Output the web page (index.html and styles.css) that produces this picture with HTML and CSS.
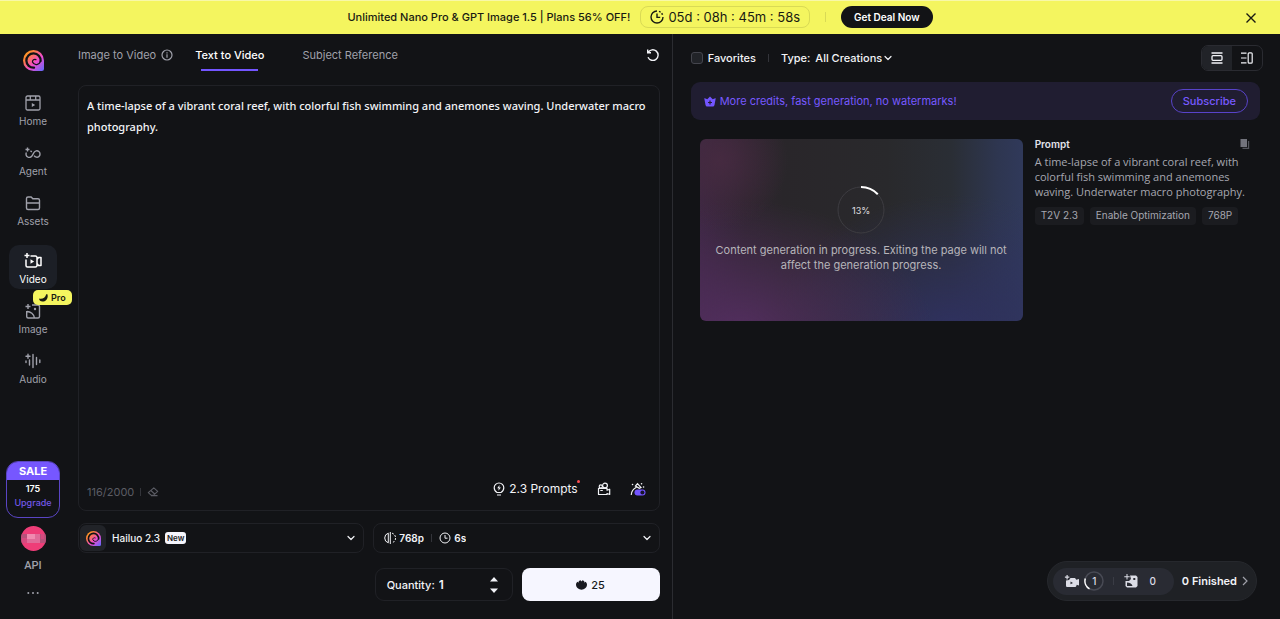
FILE: index.html
```html
<!DOCTYPE html>
<html lang="en">
<head>
    <meta charset="UTF-8">
    <meta name="viewport" content="width=device-width, initial-scale=1.0">
    <title>Hailuo AI - Text to Video</title>
    <link rel="stylesheet" href="styles.css">
</head>
<body>
    <svg class="sprite" aria-hidden="true">
        <defs>
            <linearGradient id="logo-fill" x1="0" y1="0" x2="1" y2="1">
                <stop offset="0" stop-color="#ffb800"/>
                <stop offset="0.3" stop-color="#ff7a45"/>
                <stop offset="0.6" stop-color="#f04bd0"/>
                <stop offset="1" stop-color="#5b6bff"/>
            </linearGradient>
        </defs>
        <symbol id="logo" viewBox="0 0 20 20">
            <path fill="url(#logo-fill)" d="M10 0a10 10 0 0 0 0 20h8a2 2 0 0 0 2-2v-8A10 10 0 0 0 10 0z"/>
            <path fill="none" stroke="#121316" stroke-width="2.2" stroke-linecap="round" d="M10.5 16.8A6.8 6.8 0 1 1 16.8 10.5"/>
            <path fill="none" stroke="#121316" stroke-width="1.2" stroke-linecap="round" d="M16.6 10.5A4 4 0 0 1 9 11.5A2.3 2.3 0 0 1 12.3 9.2"/>
        </symbol>
        <symbol id="chevron" viewBox="0 0 10 10">
            <path fill="none" stroke="currentColor" stroke-width="1.2" stroke-linecap="round" stroke-linejoin="round" d="M2 3.5l3 3 3-3"/>
        </symbol>
    </svg>

    <header class="promo">
        <p class="promo-text">Unlimited Nano Pro &amp; GPT Image 1.5 | Plans 56% OFF!</p>
        <div class="timer">
            <svg width="14" height="14" viewBox="0 0 14 14" fill="none" stroke="currentColor" stroke-width="1.4">
                <path d="M7 1a6 6 0 1 0 6 6M7 3.5V7.4h3.2"/>
                <path d="M9 1.4a6 6 0 0 1 3.7 3.8" stroke-dasharray="1.8 1.3"/>
            </svg>
            <span>05d : 08h : 45m : 58s</span>
        </div>
        <span class="promo-divider"></span>
        <button class="deal">Get Deal Now</button>
        <button class="close" aria-label="Close">
            <svg width="12" height="12" viewBox="0 0 12 12" stroke="currentColor" stroke-width="1.4"><path d="M1.5 1.5l9 9M10.5 1.5l-9 9"/></svg>
        </button>
    </header>

    <div class="layout">
        <nav class="sidebar">
            <a class="brand" href="#" aria-label="Hailuo"><svg width="21" height="21"><use href="#logo"/></svg></a>
            <div class="nav-group">
                <a class="nav-item" href="#">
                    <svg width="20" height="20" viewBox="0 0 20 20" fill="none" stroke="currentColor" stroke-width="1.3">
                        <rect x="3" y="3" width="14" height="14" rx="1.5"/>
                        <path d="M3 7h14M7.3 3v4M12.7 3v4"/>
                        <path d="M8.8 9.9l3.4 2-3.4 2z" fill="currentColor" stroke="none"/>
                    </svg>
                    <span>Home</span>
                </a>
                <a class="nav-item" href="#">
                    <svg width="20" height="20" viewBox="0 0 20 20" fill="none" stroke="currentColor" stroke-width="1.4">
                        <path d="M3.4 9.5a3.3 3.3 0 0 0 5.8 3.2l1.8-3.2a3.2 3.2 0 1 1 .1 3.2M7.5 7.7l1.3 1.2"/>
                        <path d="M4.5 4.5v4M2.5 6.5h4"/>
                    </svg>
                    <span>Agent</span>
                </a>
                <a class="nav-item" href="#">
                    <svg width="20" height="20" viewBox="0 0 20 20" fill="none" stroke="currentColor" stroke-width="1.4" stroke-linejoin="round">
                        <path d="M3.5 15V5.5a1.5 1.5 0 0 1 1.5-1.5h3.2l1.6 1.8H15a1.5 1.5 0 0 1 1.5 1.5V15a1.5 1.5 0 0 1-1.5 1.5H5A1.5 1.5 0 0 1 3.5 15zM3.5 10h13"/>
                    </svg>
                    <span>Assets</span>
                </a>
            </div>
            <div class="nav-group">
                <a class="nav-item active" href="#">
                    <svg width="20" height="20" viewBox="0 0 20 20" fill="none" stroke="currentColor" stroke-width="1.5" stroke-linejoin="round">
                        <path d="M7.5 5h5a1.5 1.5 0 0 1 1.5 1.5v8a1.5 1.5 0 0 1-1.5 1.5h-8A1.5 1.5 0 0 1 3 14.5v-6M14 8.5l1.5-2H18v8h-2.5l-1.5-2"/>
                        <path d="M4 2v5M1.5 4.5h5"/>
                        <path d="M7.5 8.3l3.6 2.2-3.6 2.2z" fill="currentColor" stroke="none"/>
                    </svg>
                    <span>Video</span>
                </a>
                <a class="nav-item" href="#">
                    <svg width="20" height="20" viewBox="0 0 20 20" fill="none" stroke="currentColor" stroke-width="1.4" stroke-linejoin="round">
                        <path d="M9 4h6a1.5 1.5 0 0 1 1.5 1.5v10a1.5 1.5 0 0 1-1.5 1.5H5.2a1.5 1.5 0 0 1-1.5-1.5V10M4 10.5c3.5 0 7 2.5 7.5 6.5"/>
                        <path d="M5 3v5M2.5 5.5h5"/>
                        <circle cx="12" cy="8" r="1.2" fill="currentColor" stroke="none"/>
                    </svg>
                    <span>Image</span>
                    <span class="pro">
                        <svg width="9" height="8" viewBox="0 0 9 8"><path d="M7.2.2h1.2c1.2 4-1.3 7.3-4.9 7.3C1.5 7.5.2 6.500 0 4.500c2.800 1 6.400-.4 7.200-4.300z" fill="currentColor"/></svg>
                        Pro
                    </span>
                </a>
                <a class="nav-item" href="#">
                    <svg width="20" height="20" viewBox="0 0 20 20" fill="none" stroke="currentColor" stroke-width="1.4" stroke-linecap="round">
                        <path d="M3 10v1.500M6.500 9v5M10 3.500v13M13.500 6.500v7M16.800 9v2.500M5 3.200v4M3 5.200h4"/>
                    </svg>
                    <span>Audio</span>
                </a>
            </div>
            <div class="account">
                <a class="sale" href="#">
                    <strong>SALE</strong>
                    <span class="credits">175</span>
                    <span class="upgrade">Upgrade</span>
                </a>
                <button class="avatar" aria-label="Account">
                    <svg width="25" height="25" viewBox="0 0 25 25">
                        <clipPath id="avatar-clip"><circle cx="12.5" cy="12.5" r="12.5"/></clipPath>
                        <g clip-path="url(#avatar-clip)">
                            <path fill="#ee3d78" d="M0 0h25v25H0z"/>
                            <path fill="#b8517a" d="M0 8h6v9H0zM19 8h6v9h-6z"/>
                            <path fill="#f08bb0" d="M6 8h8v5H6z"/>
                            <path fill="#e06b99" d="M14 8h5v9h-5zM6 13h8v4H6z"/>
                            <path fill="#d64a7f" d="M1 12h5v5H1zM20 8h3v5h-3z"/>
                        </g>
                    </svg>
                </button>
                <a class="api" href="#">API</a>
                <button class="more" aria-label="More">
                    <svg width="12" height="4" viewBox="0 0 12 4" fill="currentColor"><circle cx="1.3" cy="2" r="1"/><circle cx="6" cy="2" r="1"/><circle cx="10.7" cy="2" r="1"/></svg>
                </button>
            </div>
        </nav>

        <main class="editor">
            <div class="tabs">
                <a class="tab" href="#">Image to Video
                    <svg width="12" height="12" viewBox="0 0 12 12" fill="none" stroke="currentColor" stroke-width="1.2"><circle cx="6" cy="6" r="5"/><path d="M6 5.3v3.4M6 3.2v1.2"/></svg>
                </a>
                <a class="tab current" href="#">Text to Video</a>
                <a class="tab" href="#">Subject Reference</a>
                <button class="reset" aria-label="Reset">
                    <svg width="14" height="14" viewBox="0 0 14 14" fill="none" stroke="currentColor" stroke-width="1.4"><path d="M2.2 4.5A5.3 5.3 0 1 1 2 9.3M1.7 1.5v3.3H5"/></svg>
                </button>
            </div>

            <div class="prompt-box">
                <textarea class="prompt-input" aria-label="Prompt" spellcheck="false">A time-lapse of a vibrant coral reef, with colorful fish swimming and anemones waving. Underwater macro photography.</textarea>
                <div class="prompt-tools">
                    <div class="counter">
                        <span>116/2000</span>
                        <span class="bar"></span>
                        <button aria-label="Clear prompt">
                            <svg width="12" height="12" viewBox="0 0 12 12" fill="none" stroke="currentColor" stroke-width="1.1" stroke-linejoin="round"><path d="M4.3 9.3L1.3 6.6 6.8 1.8l3.9 3.6-4.4 3.9zM3.8 4.5l3.9 3.500M4 9.600h6.500"/></svg>
                        </button>
                    </div>
                    <button class="prompts">
                        <svg width="12" height="14" viewBox="0 0 12 14" fill="none" stroke="currentColor" stroke-width="1.2"><path d="M4 10.5C2.3 9.5 1.2 8 1.2 5.8a4.8 4.8 0 0 1 9.6 0c0 2.2-1.1 3.7-2.8 4.700zM4 13h4"/><path d="M6.500 3L4.200 6.300h1.500L5.400 8.800l2.500-3.300H6.300z" fill="currentColor" stroke="none"/></svg>
                        2.3 Prompts
                    </button>
                    <button class="tool" aria-label="Camera movement">
                        <svg width="14" height="14" viewBox="0 0 14 14" fill="none" stroke="currentColor" stroke-width="1.2" stroke-linejoin="round"><path d="M1.5 6.3H10v1.900l2.700-1v5.300l-2.700-1v1H1.500zM3.300 8.500h2.500"/><circle cx="3.800" cy="4.500" r="1.600"/><circle cx="8" cy="3.500" r="2.400"/></svg>
                    </button>
                    <button class="tool" aria-label="Prompt optimization">
                        <svg width="16" height="14" viewBox="0 0 16 14" fill="none" stroke="currentColor" stroke-width="1.2" stroke-linecap="round">
                            <path d="M1.3 12.5C1.500 9.500 3.300 7 6 5.500M5.500 4l2-2.300L11 5.500 9.300 6.300z"/>
                            <path stroke-width="1.5" d="M2.500 2.500h.1M13.500 5h.1M11.500 1.800h.1"/>
                            <rect x="4.5" y="7.5" width="11" height="6" rx="3" fill="#7355ff" stroke="none"/>
                            <circle cx="12.4" cy="10.5" r="2" fill="#18142c" stroke="none"/>
                        </svg>
                    </button>
                </div>
            </div>

            <div class="options">
                <label class="option model">
                    <span class="model-logo"><svg width="15" height="15"><use href="#logo"/></svg></span>
                    <select aria-label="Model"><option>Hailuo 2.3</option><option>Hailuo 02</option></select>
                    <span class="new">New</span>
                    <svg class="arrow" width="10" height="10"><use href="#chevron"/></svg>
                </label>
                <div class="option quality">
                    <svg width="12" height="12" viewBox="0 0 12 12" fill="none" stroke="currentColor" stroke-width="1"><path d="M4.300 1.200a5 5 0 0 0 0 9.600z"/><path d="M6.300 0v12"/><path d="M8 1.200a5 5 0 0 1 0 9.600" stroke-dasharray="2 1.2"/></svg>
                    <select aria-label="Resolution"><option>768p</option></select>
                    <span class="bar"></span>
                    <svg width="12" height="12" viewBox="0 0 12 12" fill="none" stroke="currentColor" stroke-width="1"><circle cx="6" cy="6" r="5"/><path d="M6 3v3.200h2.500"/></svg>
                    <select aria-label="Duration"><option>6s</option></select>
                    <svg class="arrow" width="10" height="10"><use href="#chevron"/></svg>
                </div>
            </div>

            <div class="submit-row">
                <div class="quantity">
                    <label for="quantity">Quantity:</label>
                    <input id="quantity" type="number" min="1" max="4" value="1">
                    <div class="stepper">
                        <button aria-label="Increase"><svg width="8" height="5" viewBox="0 0 8 5" fill="currentColor"><path d="M4 0l4 4.5H0z"/></svg></button>
                        <button aria-label="Decrease"><svg width="8" height="5" viewBox="0 0 8 5" fill="currentColor"><path d="M0 .5h8L4 5z"/></svg></button>
                    </div>
                </div>
                <button class="generate">
                    <svg width="11" height="10" viewBox="0 0 11 10" fill="currentColor"><path d="M3.500 9.300C1.500 8.500 0 6.800 0 4.800 0 3.500.6 2.500 1.700 1.800l.7.900L2.900 1 4.600.3l.9 1.100L6.400.3 8.100 1l.5 1.700.7-.9C10.400 2.500 11 3.500 11 4.800c0 2-1.500 3.700-3.500 4.500-1.200.6-2.800.6-4 0z"/></svg>
                    25
                </button>
            </div>
        </main>

        <section class="results">
            <div class="filters">
                <label class="favorites"><input type="checkbox">Favorites</label>
                <span class="bar"></span>
                <label class="type" for="type">Type:</label>
                <div class="type-select">
                    <select id="type"><option>All Creations</option></select>
                    <svg width="10" height="10"><use href="#chevron"/></svg>
                </div>
                <div class="view-switch">
                    <button class="on" aria-label="List view">
                        <svg width="12" height="12" viewBox="0 0 12 12" fill="none" stroke="currentColor" stroke-width="1.3"><path d="M.5 1h11M.5 11h11"/><rect x="1" y="3.7" width="10" height="4.6" rx="1"/></svg>
                    </button>
                    <button aria-label="Split view">
                        <svg width="12" height="12" viewBox="0 0 12 12" fill="none" stroke="currentColor" stroke-width="1.2"><path d="M0 1.2h5.500M0 6h5.500M0 10.800h5.500"/><rect x="7.2" y=".8" width="4" height="10.4" rx="1"/></svg>
                    </button>
                </div>
            </div>

            <div class="upsell">
                <svg width="12" height="11" viewBox="0 0 12 11"><path fill="#7355ff" d="M.8 2.200L3.300 3.300 6 .5l2.700 2.800 2.500-1.100c.3-.1.6.1.500.4L10.500 9c-.2.900-.8 1.500-1.700 1.500H3.200C2.300 10.500 1.700 9.900 1.500 9L.3 2.600c-.1-.3.2-.5.500-.4z"/><path stroke="#201d31" stroke-width="1.2" d="M6 4.500v4M4 6.500h4"/></svg>
                <p>More credits, fast generation, no watermarks!</p>
                <button class="subscribe">Subscribe</button>
            </div>

            <article class="job">
                <div class="preview">
                    <div class="progress">
                        <svg width="48" height="48" viewBox="0 0 48 48" fill="none">
                            <circle cx="24" cy="24" r="23" stroke="#3d3c41"/>
                            <circle class="progress-arc" cx="24" cy="24" r="23" pathLength="100" stroke-dasharray="13 87"/>
                        </svg>
                        <span>13%</span>
                    </div>
                    <p>Content generation in progress. Exiting the page will not affect the generation progress.</p>
                </div>
                <div class="details">
                    <div class="details-head">
                        <h2>Prompt</h2>
                        <button aria-label="Copy prompt">
                            <svg width="10" height="10" viewBox="0 0 10 10"><path fill="#72737c" d="M.5 0H7v8H.5z"/><path fill="none" stroke="#53545c" stroke-width="1.2" d="M8.600 2v7.400H2.500"/></svg>
                        </button>
                    </div>
                    <p>A time-lapse of a vibrant coral reef, with colorful fish swimming and anemones waving. Underwater macro photography.</p>
                    <ul class="tags">
                        <li>T2V 2.3</li>
                        <li>Enable Optimization</li>
                        <li>768P</li>
                    </ul>
                </div>
            </article>

            <div class="queue">
                <div class="queue-counts">
                    <svg width="16" height="14" viewBox="0 0 16 14" fill="currentColor"><path fill-rule="evenodd" d="M5 6l1.500-2H11l1.300 1.800L15 5v6.500l-2.300-.8-.5 1.500c-.1.500-.5.800-1 .8H3.500c-1 0-1.500-.5-1.500-1.500v-5zM6.500 7.500v2.800L9 8.900z"/><path d="M2.500 1h1.200v1.600h1.600v1.200H3.700v1.600H2.500V3.800H.9V2.600h1.600z"/></svg>
                    <span class="queue-ring">
                        <svg width="20" height="20" viewBox="0 0 20 20" fill="none" stroke-width="1.5"><circle cx="10" cy="10" r="9" stroke="#484a54"/><path stroke="#fff" d="M5.500 17.800A9 9 0 0 1 1.300 7.500"/></svg>
                        <b>1</b>
                    </span>
                    <span class="bar"></span>
                    <svg width="14" height="14" viewBox="0 0 14 14" fill="currentColor"><path fill-rule="evenodd" d="M6 1.500h6L13.500 3v9L12 13.500H3L1.500 12V7H5l2-2zM3 8.500V12h5.500C8 10 6 8.500 3 8.500zM9.300 4v2h2V4z"/><path d="M2.500 0h1v2.200h2.200v1H3.500v2.200h-1V3.200H.3v-1h2.200z"/></svg>
                    <b class="queue-zero">0</b>
                </div>
                <a href="#">0 Finished
                    <svg width="6" height="10" viewBox="0 0 6 10" fill="none" stroke="#a0a1aa" stroke-width="1.2"><path d="M1 1l4 4-4 4"/></svg>
                </a>
            </div>
        </section>
    </div>
</body>
</html>
```

FILE: styles.css
```css
* {
    box-sizing: border-box;
}

body {
    display: flex;
    flex-direction: column;
    min-height: 100vh;
    margin: 0;
    background: #121316;
    color: #f2f3f7;
    font-family: Inter, "Liberation Sans", sans-serif;
    font-size: 12px;
    line-height: 16px;
}

p, h2, ul {
    margin: 0;
    padding: 0;
}

a {
    color: inherit;
    text-decoration: none;
}

button, select, input, textarea {
    margin: 0;
    padding: 0;
    border: none;
    background: none;
    color: inherit;
    font: inherit;
}

button {
    cursor: pointer;
}

button, a {
    flex-shrink: 0;
}

select {
    appearance: none;
}

svg {
    display: block;
    flex-shrink: 0;
}

.sprite {
    position: absolute;
    width: 0;
    height: 0;
}

.bar {
    width: 1px;
    height: 8px;
    background: #33343a;
}

/* promo banner */
.promo {
    position: relative;
    display: flex;
    align-items: center;
    justify-content: center;
    height: 34px;
    padding-bottom: 2px;
    background: #f4f55f;
    border-top: 1px solid #f8f8a8;
    color: #191a12;
}

.promo-text {
    font-size: 11px;
    font-weight: 500;
}

.timer {
    display: flex;
    align-items: center;
    gap: 4px;
    margin-left: 10px;
    padding: 2px 9px;
    border: 1px solid #d9da55;
    border-radius: 8px;
    font-size: 13px;
}

.promo-divider {
    width: 1px;
    height: 10px;
    margin: 0 15px;
    background: #d9da55;
}

.deal {
    height: 22px;
    padding: 0 13px;
    border-radius: 11px;
    background: #121316;
    color: #fff;
    font-size: 10px;
    font-weight: 600;
}

.close {
    position: absolute;
    right: 23px;
    top: 11px;
}

.layout {
    display: flex;
    flex: 1;
}

/* sidebar */
.sidebar {
    display: flex;
    flex-direction: column;
    flex-shrink: 0;
    align-items: center;
    width: 66px;
    padding: 16px 0 22px;
    color: #a0a1ab;
}

.brand {
    margin-bottom: 16px;
}

.nav-group {
    display: flex;
    flex-direction: column;
    gap: 6px;
    margin-bottom: 14px;
}

.nav-item {
    position: relative;
    display: flex;
    flex-direction: column;
    align-items: center;
    gap: 1px;
    width: 48px;
    height: 44px;
    padding-top: 6px;
    border-radius: 10px;
    font-size: 10px;
    line-height: 14px;
}

.nav-item.active {
    background: #1c1f26;
    color: #fff;
}

.pro {
    position: absolute;
    top: -5px;
    left: 24px;
    display: flex;
    align-items: center;
    gap: 3px;
    padding: 0 6px;
    border-radius: 5px;
    background: #f4f55f;
    color: #191a12;
    font-size: 9px;
    font-weight: 600;
    line-height: 15px;
}

.account {
    display: flex;
    flex-direction: column;
    align-items: center;
    margin-top: auto;
}

.sale {
    display: flex;
    flex-direction: column;
    align-items: center;
    width: 54px;
    height: 57px;
    border: 1px solid #5a45c4;
    border-radius: 12px;
    overflow: hidden;
    font-size: 9px;
    line-height: 14px;
}

.sale strong {
    align-self: stretch;
    margin-bottom: 2px;
    background: #7657ff;
    color: #fff;
    font-size: 11px;
    line-height: 18px;
    text-align: center;
}

.credits {
    color: #fff;
    font-weight: 600;
}

.upgrade {
    color: #7358e8;
    font-weight: 500;
}

.avatar {
    margin-top: 8px;
}

.api {
    margin-top: 7px;
    font-family: Roboto, sans-serif;
    font-size: 11px;
    font-weight: 500;
}

.more {
    margin-top: 15px;
    padding: 2px;
}

/* editor */
.editor {
    display: flex;
    flex: 1 1 50%;
    flex-direction: column;
    min-width: 0;
    padding: 12px 12px 18px;
    border-right: 1px solid #2b2c31;
}

.tabs {
    display: flex;
    align-items: center;
    margin-bottom: 15px;
}

.tab {
    display: flex;
    align-items: center;
    gap: 5px;
    height: 24px;
    margin-right: 22px;
    padding-bottom: 6px;
    color: #a0a1ab;
    font-size: 11px;
}

.tab.current {
    position: relative;
    margin-right: 38px;
    color: #fff;
    font-weight: 500;
}

.tab.current::after {
    content: "";
    position: absolute;
    right: 6px;
    bottom: -1px;
    left: 6px;
    height: 2px;
    background: #7355ff;
}

.reset {
    margin-left: auto;
    padding-bottom: 6px;
}

.prompt-box {
    display: flex;
    flex: 1;
    flex-direction: column;
    margin-bottom: 12px;
    padding: 9px 9px 6px 8px;
    border: 1px solid #202126;
    border-radius: 8px;
}

.prompt-input {
    flex: 1;
    resize: none;
    outline: none;
    font-family: "Noto Sans", "Open Sans", sans-serif;
    font-size: 11px;
    font-weight: 500;
    line-height: 21px;
}

.prompt-tools {
    display: flex;
    align-items: center;
    gap: 19px;
    padding: 0 4px 4px 0;
}

.counter {
    display: flex;
    align-items: center;
    gap: 6px;
    margin-right: auto;
    padding-top: 7px;
    color: #5b5c64;
    font-size: 11px;
}

.prompts {
    position: relative;
    display: flex;
    align-items: center;
    gap: 4px;
    font-size: 12px;
}

.prompts::after {
    content: "";
    position: absolute;
    top: -1px;
    right: -2px;
    width: 3px;
    height: 3px;
    border-radius: 50%;
    background: #ff4d4f;
}

.options {
    display: grid;
    grid-template-columns: 1fr 1fr;
    gap: 9px;
    margin-bottom: 15px;
}

.option {
    display: flex;
    align-items: center;
    gap: 4px;
    height: 30px;
    padding: 1px 7px 1px 10px;
    border: 1px solid #202126;
    border-radius: 8px;
    font-size: 10px;
    font-weight: 500;
}

.model {
    padding-left: 1px;
}

.quality {
    gap: 3px;
    font-weight: 600;
}

.option .bar {
    margin: 0 4px;
}

.model-logo {
    display: flex;
    align-items: center;
    justify-content: center;
    width: 26px;
    height: 26px;
    margin-right: 2px;
    border-radius: 6px;
    background: #212328;
}

.new {
    padding: 0 2px;
    border-radius: 3px;
    background: #f5f5fc;
    color: #191a20;
    font-size: 8px;
    font-weight: 600;
    line-height: 12px;
}

.arrow {
    margin-left: auto;
}

.submit-row {
    display: flex;
    justify-content: flex-end;
    gap: 9px;
}

.quantity {
    display: flex;
    align-items: center;
    gap: 4px;
    width: 138px;
    height: 33px;
    padding: 0 14px 0 11px;
    border: 1px solid #202126;
    border-radius: 9px;
    font-size: 11px;
    font-weight: 500;
}

.quantity input {
    width: 20px;
    appearance: textfield;
    font-size: 12px;
    font-weight: 600;
}

.stepper {
    display: flex;
    flex-direction: column;
    gap: 6px;
    margin-left: auto;
}

.generate {
    display: flex;
    align-items: center;
    justify-content: center;
    gap: 4px;
    width: 138px;
    height: 33px;
    border-radius: 8px;
    background: #f6f6ff;
    color: #191a20;
    font-size: 11px;
    font-weight: 500;
}

/* results */
.results {
    position: relative;
    flex: 1 1 50%;
    min-width: 0;
    padding: 11px 20px 18px 18px;
}

.filters {
    display: flex;
    align-items: center;
    margin-bottom: 11px;
    font-size: 11px;
    font-weight: 500;
}

.favorites {
    display: flex;
    align-items: center;
    gap: 5px;
}

.favorites input {
    width: 12px;
    height: 12px;
    appearance: none;
    border: 1px solid #44454d;
    border-radius: 3px;
    background: #212328;
}

.filters .bar {
    margin: 0 12px;
}

.type-select {
    display: flex;
    align-items: center;
    gap: 1px;
    margin-left: 5px;
}

.view-switch {
    display: flex;
    margin-left: auto;
    margin-right: -3px;
    border: 1px solid #2a2b31;
    border-radius: 7px;
    overflow: hidden;
}

.view-switch button {
    width: 30px;
    height: 24px;
    padding: 0 9px;
}

.view-switch .on {
    background: #212328;
}

.upsell {
    display: flex;
    align-items: center;
    gap: 4px;
    height: 38px;
    margin-bottom: 19px;
    padding: 0 12px 0 13px;
    border-radius: 9px;
    background: #201d31;
    color: #7759ff;
    font-size: 11px;
}

.subscribe {
    height: 24px;
    margin-left: auto;
    padding: 0 11px;
    border: 1px solid #5843c9;
    border-radius: 12px;
    font-size: 11px;
    font-weight: 500;
}

.job {
    display: grid;
    grid-template-columns: 3fr 2fr;
    align-items: start;
    gap: 12px;
    padding: 0 10px 0 9px;
}

.preview {
    display: flex;
    flex-direction: column;
    align-items: center;
    justify-content: center;
    gap: 9px;
    aspect-ratio: 16 / 9;
    padding: 0 12px;
    border-radius: 6px;
    background:
        radial-gradient(circle at 6% 12%, #452a40 0%, #452a4000 20%),
        radial-gradient(ellipse at 12% 105%, #522e5e 0%, #522e5e00 48%),
        radial-gradient(ellipse at 78% 105%, #2f3160 0%, #2f316000 50%),
        linear-gradient(90deg, #3c2742 0%, #2e252f 14%, #29262a 26%, #29292c 58%, #2a2e35 78%, #2e3650 92%, #30395a 100%);
    color: #b7b5ba;
    font-size: 11px;
    line-height: 15px;
    text-align: center;
}

.progress {
    display: grid;
    place-items: center;
    color: #d0cfd3;
    font-size: 9px;
    font-weight: 500;
}

.progress > * {
    grid-area: 1 / 1;
}

.progress-arc {
    stroke: #fff;
    stroke-width: 2;
    transform: rotate(-90deg);
    transform-origin: center;
}

.details {
    min-width: 0;
    color: #a6a7b0;
}

.details-head {
    display: flex;
    align-items: center;
    justify-content: space-between;
    margin-bottom: 5px;
    line-height: 10px;
}

.details-head h2 {
    color: #e3e4ea;
    font-size: 10px;
    font-weight: 600;
}

.details p {
    font-family: "Open Sans", "Noto Sans", sans-serif;
    font-size: 11px;
    line-height: 15px;
}

.tags {
    display: flex;
    gap: 6px;
    margin-top: 8px;
    list-style: none;
    font-size: 10px;
    line-height: 15px;
}

.tags li {
    padding: 1px 6px 2px;
    border-radius: 4px;
    background: #1b1c20;
    white-space: nowrap;
}

.queue {
    position: absolute;
    right: 23px;
    bottom: 18px;
    display: flex;
    align-items: center;
    gap: 8px;
    height: 40px;
    padding: 0 8px 0 5px;
    border: 1px solid #26282d;
    border-radius: 20px;
    background: #1f2125;
    font-size: 11px;
    font-weight: 600;
}

.queue-counts {
    display: flex;
    align-items: center;
    height: 27px;
    padding: 0 18px 0 11px;
    border-radius: 14px;
    background: #292b33;
    color: #dcdde6;
    font-size: 10px;
}

.queue-counts b {
    font-weight: 500;
}

.queue-ring {
    display: grid;
    place-items: center;
    margin-left: 4px;
}

.queue-ring > * {
    grid-area: 1 / 1;
}

.queue-counts .bar {
    margin: 0 10px 0 9px;
    background: #3a3c45;
}

.queue-zero {
    margin-left: 11px;
}

.queue a {
    display: flex;
    align-items: center;
    gap: 5px;
}
```
